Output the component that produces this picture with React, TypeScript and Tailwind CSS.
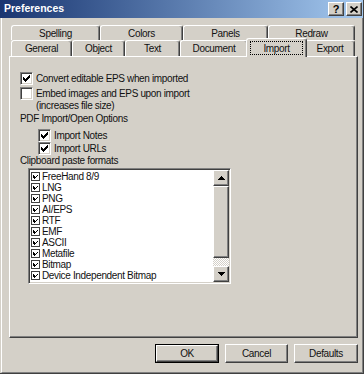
import React from 'react';

const raised =
  'border border-t-white border-l-white border-r-[#404040] border-b-[#404040] shadow-[inset_-1px_-1px_#808080]';

const BigCheck: React.FC<{ checked?: boolean }> = ({ checked }) => (
  <div className="w-[13px] h-[13px] shrink-0 bg-white border border-t-[#808080] border-l-[#808080] border-r-white border-b-white shadow-[inset_1px_1px_#404040,inset_-1px_-1px_#d4d0c8] flex items-center justify-center">
    {checked && (
      <svg width="7" height="7" viewBox="0 0 7 7" shapeRendering="crispEdges">
        <path d="M6 0h1v3h-1v1h-1v1h-1v1h-1v1h-1v-1h-1v-1h-1v-3h1v1h1v1h1v-1h1v-1h1z" fill="#000" />
      </svg>
    )}
  </div>
);

const SmallCheck: React.FC = () => (
  <div className="w-[9px] h-[9px] shrink-0 bg-white border border-[#404040] flex items-center justify-center">
    <svg width="5" height="4" viewBox="0 0 5 4" shapeRendering="crispEdges">
      <path d="M0 0h1v1h1v1h1v-1h1v-1h1v1h-1v1h-1v1h-1v1h-1v-1h-1v-1h-1z" fill="#000" />
    </svg>
  </div>
);

const Tab: React.FC<{ label: string; w: string }> = ({ label, w }) => (
  <div
    className={`${w} h-full shrink-0 flex items-center justify-center border-l border-t border-white border-r border-r-[#404040] shadow-[inset_-1px_0_#808080] rounded-t-[3px]`}
  >
    {label}
  </div>
);

const formats = [
  'FreeHand 8/9',
  'LNG',
  'PNG',
  'AI/EPS',
  'RTF',
  'EMF',
  'ASCII',
  'Metafile',
  'Bitmap',
  'Device Independent Bitmap',
];

const App: React.FC = () => {
  return (
    <div className="w-[364px] h-[374px] bg-[#d4d0c8] flex flex-col border-r border-b border-[#404040] text-[10px] tracking-[-0.35px] text-[#111] [font-family:'Liberation_Sans',Arial,sans-serif]">
      {/* title bar */}
      <div className="h-[18px] shrink-0 flex items-center justify-between pl-[4px] pr-px bg-gradient-to-r from-[#1a3570] to-[#a6caf0]">
        <span className="text-white font-bold text-[10.5px] tracking-normal">Preferences</span>
        <div className="flex gap-[2px]">
          <div className={`${raised} w-[16px] h-[14px] bg-[#d4d0c8] flex items-center justify-center font-bold text-[11px] leading-none tracking-normal text-black`}>
            ?
          </div>
          <div className={`${raised} w-[16px] h-[14px] bg-[#d4d0c8] flex items-center justify-center`}>
            <svg width="8" height="7" viewBox="0 0 8 7">
              <path d="M0.5 0.5 L7.5 6.5 M7.5 0.5 L0.5 6.5" stroke="#000" strokeWidth="1.6" />
            </svg>
          </div>
        </div>
      </div>

      <div className="flex-1 flex flex-col ml-px border-l border-white border-r border-b border-r-[#808080] border-b-[#808080] pl-[7px] pr-[4px] pt-[7px]">
        {/* tab rows */}
        <div className="h-[15px] flex pl-[2px]">
          <Tab label="Spelling" w="w-[89px]" />
          <Tab label="Colors" w="w-[83px]" />
          <Tab label="Panels" w="w-[85px]" />
          <Tab label="Redraw" w="w-[87px]" />
        </div>
        <div className="h-[16px] flex items-end pl-[2px]">
          <Tab label="General" w="w-[61px]" />
          <Tab label="Object" w="w-[53px]" />
          <Tab label="Text" w="w-[55px]" />
          <Tab label="Document" w="w-[68px]" />
          <div className="relative z-10 w-[61px] h-[19px] -mb-px -mx-[2px] shrink-0 flex pt-[2px] pb-[2px] px-[3px] bg-[#d4d0c8] border-l border-t border-white border-r border-r-[#404040] shadow-[inset_-1px_0_#808080] rounded-t-[3px]">
            <div className="flex-1 flex items-center justify-center border border-dotted border-black">Import</div>
          </div>
          <Tab label="Export" w="w-[50px]" />
        </div>

        {/* panel */}
        <div className="h-[282px] shrink-0 flex flex-col border-l border-t border-white border-r border-b border-r-[#404040] border-b-[#404040] shadow-[inset_-1px_-1px_#808080] pl-[10px] pt-[15px]">
          <div className="h-[13px] flex items-center gap-[3px]">
            <BigCheck checked />
            <span>Convert editable EPS when imported</span>
          </div>
          <div className="h-[13px] mt-[2px] flex items-center gap-[3px]">
            <BigCheck />
            <span>Embed images and EPS upon import</span>
          </div>
          <div className="h-[12px] leading-[12px] pl-[16px]">(increases file size)</div>
          <div className="h-[12px] leading-[12px] mt-px">PDF Import/Open Options</div>
          <div className="h-[13px] mt-[4px] pl-[18px] flex items-center gap-[3px]">
            <BigCheck checked />
            <span>Import Notes</span>
          </div>
          <div className="h-[13px] pl-[18px] flex items-center gap-[3px]">
            <BigCheck checked />
            <span>Import URLs</span>
          </div>
          <div className="h-[12px] leading-[12px]">Clipboard paste formats</div>

          {/* list box */}
          <div className="mt-px ml-[8px] w-[203px] h-[116px] flex bg-white border border-t-[#808080] border-l-[#808080] border-r-white border-b-white shadow-[inset_1px_1px_#404040,inset_-1px_-1px_#d4d0c8] p-px">
            <div className="flex-1 overflow-hidden pt-px">
              {formats.map(f => (
                <div key={f} className="h-[11px] flex items-center gap-[2px] pl-px whitespace-nowrap leading-[11px]">
                  <SmallCheck />
                  <span>{f}</span>
                </div>
              ))}
            </div>
            <div className="w-[16px] flex flex-col">
              <div className={`${raised} h-[16px] bg-[#d4d0c8] flex items-center justify-center`}>
                <svg width="7" height="4" viewBox="0 0 7 4" shapeRendering="crispEdges">
                  <path d="M3 0h1v1h1v1h1v1h1v1h-7v-1h1v-1h1v-1h1z" fill="#000" />
                </svg>
              </div>
              <div className={`${raised} h-[72px] bg-[#d4d0c8]`} />
              <div className="flex-1 bg-[repeating-conic-gradient(#d4d0c8_0_25%,#ffffff_0_50%)] bg-size-[2px_2px]" />
              <div className={`${raised} h-[16px] bg-[#d4d0c8] flex items-center justify-center`}>
                <svg width="7" height="4" viewBox="0 0 7 4" shapeRendering="crispEdges">
                  <path d="M0 0h7v1h-1v1h-1v1h-1v1h-1v-1h-1v-1h-1v-1h-1z" fill="#000" />
                </svg>
              </div>
            </div>
          </div>
        </div>

        {/* buttons */}
        <div className="mt-[6px] flex justify-end gap-[6px]">
          <div className="w-[64px] h-[19px] border border-black flex">
            <div className={`${raised} flex-1 flex items-center justify-center`}>OK</div>
          </div>
          <div className={`${raised} w-[63px] h-[19px] flex items-center justify-center`}>Cancel</div>
          <div className={`${raised} w-[64px] h-[19px] flex items-center justify-center`}>Defaults</div>
        </div>
      </div>
    </div>
  );
};

export default App;
